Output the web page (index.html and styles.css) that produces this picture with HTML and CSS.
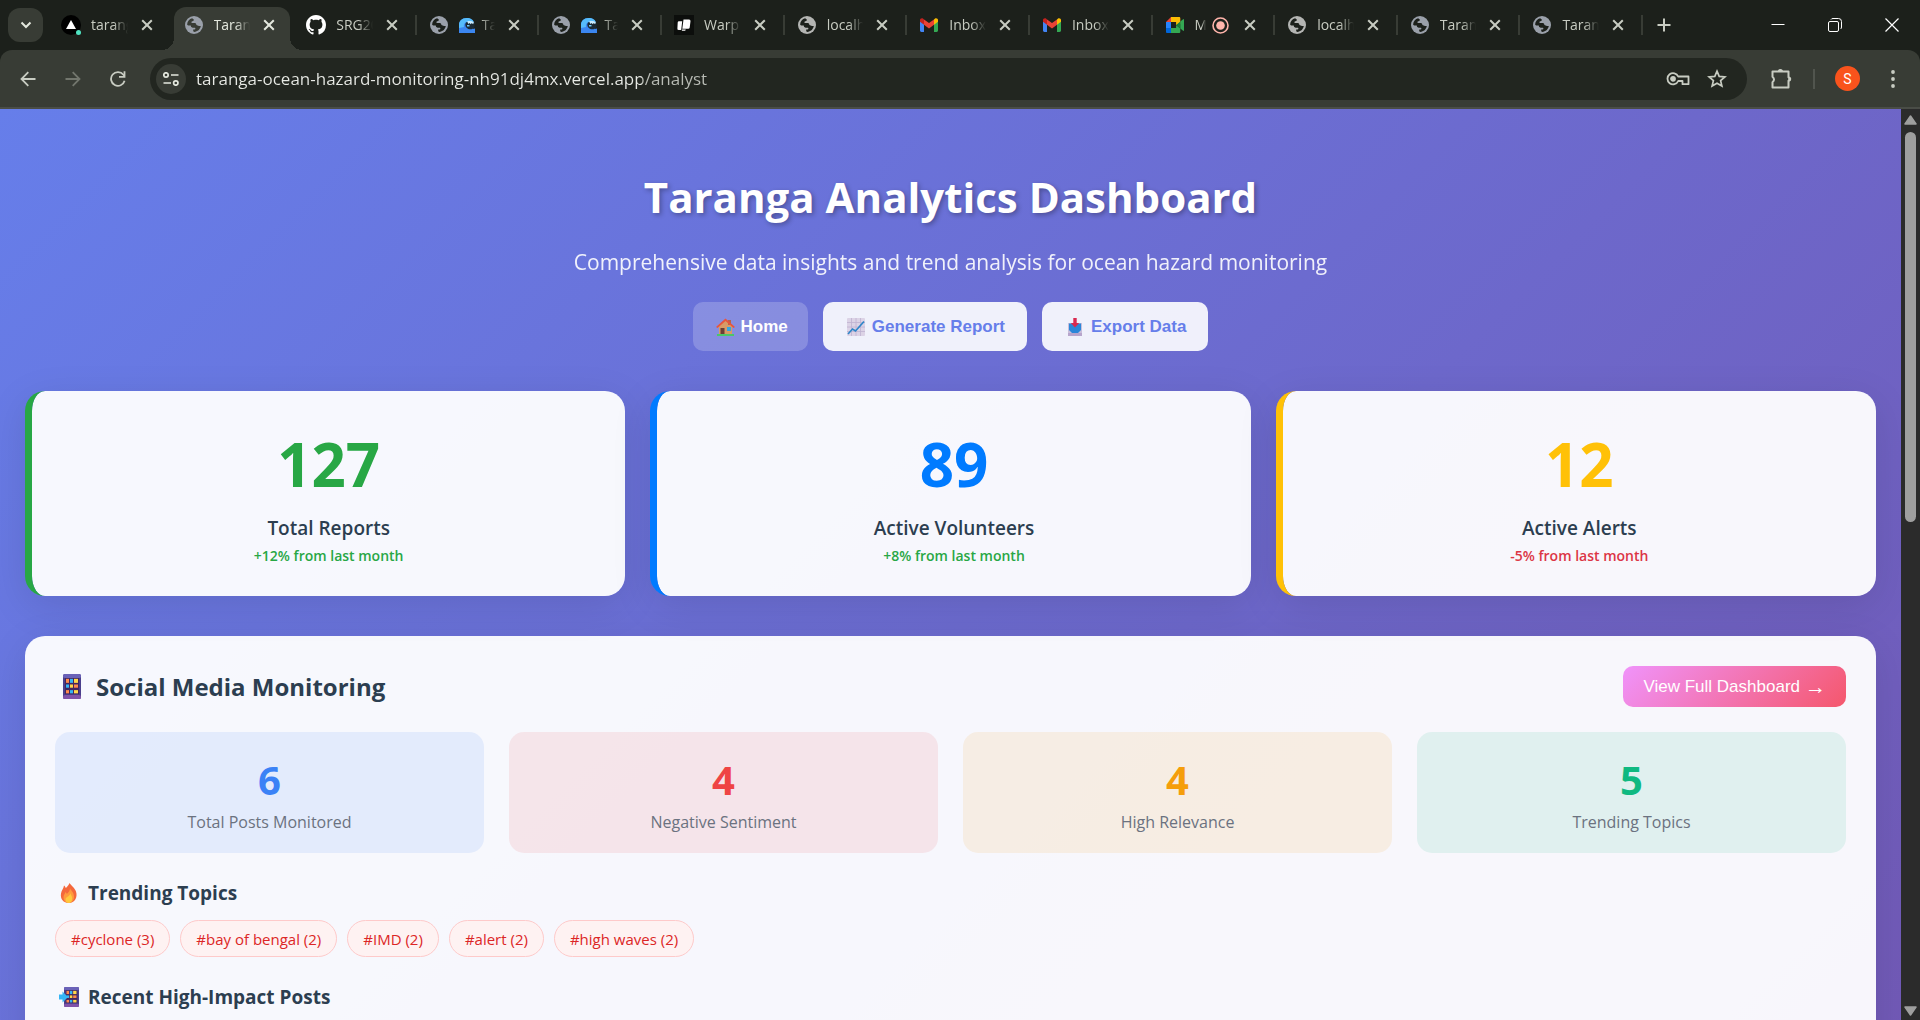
FILE: index.html
```html
<!DOCTYPE html>
<html lang="en">
<head>
<meta charset="utf-8">
<meta name="viewport" content="width=device-width, initial-scale=1">
<title>Taranga Analytics Dashboard</title>
<link rel="stylesheet" href="styles.css">
</head>
<body>
<svg class="defs" width="0" height="0" aria-hidden="true">
  <symbol id="globe" viewBox="0 0 18 18">
    <circle cx="9" cy="9" r="9" fill="currentColor"/>
    <path fill="var(--cut)" d="M2.1 8.4 C2.3 5.2 4.3 2.9 7.1 2.2 L8.8 3.5 C8.9 4.6 8.4 5 7.4 5.3 C6.3 5.7 6.2 6.5 6.8 7.1 H9.9 C11 7.2 11.3 8 11.4 9.1 C12.4 9.3 12.9 10 14.3 9.9 L15.8 10.1 C15.2 13.5 12.6 15.8 9.3 15.9 L8.2 15.2 V13.6 H9.6 C10.5 13.4 10.6 12.4 10 11.7 H7.7 C6.3 11.5 5.8 10.7 5.8 9.6 H4 C3 9.5 2.6 8.9 2.1 8.4Z"/>
  </symbol>
  <symbol id="x" viewBox="0 0 12 12"><path d="M1.2 1.2 10.8 10.8M10.8 1.2 1.2 10.8" stroke="currentColor" stroke-width="2" fill="none"/></symbol>
  <symbol id="gmail" viewBox="0 0 18 14">
    <path fill="#4285f4" d="M0 3v9.6C0 13.400.6 14 1.300 14H4V5.500z"/>
    <path fill="#34a853" d="M14 14h2.700c.7 0 1.300-.6 1.300-1.400V3l-4 2.500z"/>
    <path fill="#ea4335" d="M4 6.800V1.400l5 3.700 5-3.700v5.400l-5 3.800z"/>
    <path fill="#c5221f" d="M0 2.200v1.600l4 3V1.400L3.200.8C1.900-.2 0 .6 0 2.200z"/>
    <path fill="#fbbc04" d="M14 1.400v5.400l4-3V2.200c0-1.600-1.900-2.400-3.200-1.400z"/>
  </symbol>
  <symbol id="wave" viewBox="0 0 16 15">
    <path fill="#3b86f0" d="M0 15V7C0 3 3 0 7.500 0 12 0 15 2.500 15 6l-1 5 2-.5V15z"/>
    <path fill="#56bcfb" d="M0 10V7C0 3 3 0 7.500 0 12 0 14.500 2 15 5L9 4C6 4 4.500 6 5 9z"/>
    <path fill="#1c2a33" d="M7 4.500c2-1.500 6-1.300 8.500.5v4c-1 1.800-3 2.500-5 2.200C7 10.800 5.300 7 7 4.500z"/>
    <path fill="#c9ecff" d="M8 3.500c3-1 6-.5 7 1.500l-1.200 1-1-1-1 1.200-1.200-1.200-1 1z"/>
    <path fill="#6cc8fb" d="M8 7h2.500v1.500H8z"/>
  </symbol>
  <symbol id="phone" viewBox="0 0 18 31" preserveAspectRatio="none">
    <rect width="18" height="31" rx="2" fill="#4a3f8c"/>
    <rect width="18" height="5" rx="2" fill="#6a62b8"/>
    <rect y="26" width="18" height="5" rx="2" fill="#8053a8"/>
    <rect x="2" y="5" width="14" height="20" fill="#43265f"/>
    <g fill="#ff8a4c"><rect x="3" y="6" width="3" height="5"/><rect x="11" y="13" width="4" height="4"/><rect x="3" y="20" width="3" height="4"/></g>
    <g fill="#35b5f5"><rect x="7" y="6" width="3" height="5"/><rect x="3" y="13" width="3" height="4"/><rect x="7" y="20" width="3" height="4"/></g>
    <g fill="#ffd84a"><rect x="11" y="6" width="4" height="5"/><rect x="7" y="13" width="3" height="4"/><rect x="11" y="20" width="4" height="4"/></g>
  </symbol>
</svg>

<header class="browser">
  <div class="strip">
    <button class="tab-search" aria-label="Search tabs"><svg width="12" height="8" viewBox="0 0 12 8"><path d="M1.500 1.500 6 6l4.500-4.500" fill="none" stroke="currentColor" stroke-width="2"/></svg></button>
    <div class="tabs">
      <div class="tab"><svg class="fav" width="20" height="20" viewBox="0 0 20 20"><circle cx="10" cy="10" r="10" fill="#000"/><path d="M10 5l5 9H5z" fill="#fff"/><circle cx="17.500" cy="17.500" r="2.500" fill="#50e3c2"/></svg><span class="tab-title">taranga</span><button class="tab-close" aria-label="Close tab"><svg width="12" height="12"><use href="#x"/></svg></button></div>
      <div class="tab active"><svg class="fav cool" width="18" height="18"><use href="#globe"/></svg><span class="tab-title">Taranga</span><button class="tab-close" aria-label="Close tab"><svg width="12" height="12"><use href="#x"/></svg></button></div>
      <div class="tab"><svg class="fav" width="20" height="20" viewBox="0 0 16 16"><path fill="#fff" d="M8 0C3.580 0 0 3.580 0 8c0 3.540 2.290 6.530 5.470 7.590.4.070.55-.17.55-.38 0-.19-.01-.82-.01-1.490-2.010.37-2.530-.49-2.690-.94-.09-.23-.48-.94-.82-1.130-.28-.15-.68-.52-.01-.53.63-.01 1.080.58 1.230.82.72 1.210 1.870.87 2.330.66.070-.52.28-.87.51-1.070-1.780-.2-3.640-.89-3.640-3.950 0-.87.31-1.590.82-2.150-.08-.2-.36-1.020.08-2.120 0 0 .67-.21 2.200.82.64-.18 1.320-.27 2-.27s1.360.09 2 .27c1.530-1.040 2.200-.82 2.200-.82.44 1.100.16 1.920.08 2.120.51.56.82 1.270.82 2.150 0 3.070-1.870 3.750-3.650 3.950.29.25.54.73.54 1.480 0 1.070-.01 1.930-.01 2.200 0 .21.15.46.55.38A8 8 0 0 0 16 8c0-4.420-3.580-8-8-8z"/></svg><span class="tab-title">SRG20</span><button class="tab-close" aria-label="Close tab"><svg width="12" height="12"><use href="#x"/></svg></button></div>
      <div class="tab"><svg class="fav cool" width="18" height="18"><use href="#globe"/></svg><span class="tab-title"><svg width="16" height="15"><use href="#wave"/></svg>Taranga</span><button class="tab-close" aria-label="Close tab"><svg width="12" height="12"><use href="#x"/></svg></button></div>
      <div class="tab"><svg class="fav cool" width="18" height="18"><use href="#globe"/></svg><span class="tab-title"><svg width="16" height="15"><use href="#wave"/></svg>Taranga</span><button class="tab-close" aria-label="Close tab"><svg width="12" height="12"><use href="#x"/></svg></button></div>
      <div class="tab"><svg class="fav" width="20" height="20" viewBox="0 0 20 20"><rect width="20" height="20" fill="#0c0e0c"/><path fill="#fff" d="M9.500 4.500h5.500a1.500 1.500 0 0 1 1.500 1.700l-.8 6.300a1.500 1.500 0 0 1-1.500 1.300H8.300z"/><path fill="#fff" d="M5 6.300h3.200L7.200 15H4.800a1.400 1.400 0 0 1-1.400-1.600l.3-5.800A1.300 1.300 0 0 1 5 6.300zM8 14.500h3.800l-.6 1.300H7.800z"/></svg><span class="tab-title">Warp</span><button class="tab-close" aria-label="Close tab"><svg width="12" height="12"><use href="#x"/></svg></button></div>
      <div class="tab"><svg class="fav warm" width="18" height="18"><use href="#globe"/></svg><span class="tab-title">localhost</span><button class="tab-close" aria-label="Close tab"><svg width="12" height="12"><use href="#x"/></svg></button></div>
      <div class="tab"><svg class="fav" width="18" height="14"><use href="#gmail"/></svg><span class="tab-title">Inbox</span><button class="tab-close" aria-label="Close tab"><svg width="12" height="12"><use href="#x"/></svg></button></div>
      <div class="tab"><svg class="fav" width="18" height="14"><use href="#gmail"/></svg><span class="tab-title">Inbox</span><button class="tab-close" aria-label="Close tab"><svg width="12" height="12"><use href="#x"/></svg></button></div>
      <div class="tab"><svg class="fav" width="18" height="16" viewBox="0 0 18 16"><path fill="#ea4335" d="M0 5 5 0v5z"/><path fill="#fbbc04" d="M5 0h8c.8 0 1.300.5 1.300 1.300V7l-4.200 1V5H5z"/><path fill="#2684fc" d="M0 5h5v6H0z"/><path fill="#0066da" d="M0 11h5v5H1.300C.5 16 0 15.500 0 14.700z"/><path fill="#34a853" d="M5 11h5.100V8l4.200 3.500v3.200c0 .8-.5 1.300-1.300 1.300H5z"/><path fill="#188038" d="M10.100 8 14.300 4.500v7z"/><path fill="#34a853" d="m14.300 4.500 2.800-2.300c.4-.3.900 0 .9.500v10.600c0 .5-.5.800-.9.500l-2.800-2.300z"/></svg><span class="tab-title short">Meet</span><svg class="rec" width="17" height="17" viewBox="0 0 17 17"><circle cx="8.500" cy="8.500" r="7.500" fill="none" stroke="#ffb4ab" stroke-width="1.600"/><circle cx="8.500" cy="8.500" r="4.300" fill="#ffb4ab"/></svg><button class="tab-close" aria-label="Close tab"><svg width="12" height="12"><use href="#x"/></svg></button></div>
      <div class="tab"><svg class="fav warm" width="18" height="18"><use href="#globe"/></svg><span class="tab-title">localhost</span><button class="tab-close" aria-label="Close tab"><svg width="12" height="12"><use href="#x"/></svg></button></div>
      <div class="tab"><svg class="fav cool" width="18" height="18"><use href="#globe"/></svg><span class="tab-title">Taranga</span><button class="tab-close" aria-label="Close tab"><svg width="12" height="12"><use href="#x"/></svg></button></div>
      <div class="tab"><svg class="fav cool" width="18" height="18"><use href="#globe"/></svg><span class="tab-title">Taranga</span><button class="tab-close" aria-label="Close tab"><svg width="12" height="12"><use href="#x"/></svg></button></div>
    </div>
    <button class="new-tab" aria-label="New tab"><svg width="14" height="14" viewBox="0 0 14 14"><path d="M7 .5v13M.5 7h13" stroke="currentColor" stroke-width="2"/></svg></button>
    <div class="window-controls">
      <button aria-label="Minimize"><svg width="14" height="14" viewBox="0 0 14 14"><path d="M.5 6.500h13" stroke="#fff"/></svg></button>
      <button aria-label="Restore"><svg width="14" height="14" viewBox="0 0 14 14"><rect x=".5" y="3.500" width="10" height="10" rx="1.500" fill="none" stroke="#fff"/><path d="M3 1.500Q3.500.5 5 .5h5.500a3 3 0 0 1 3 3V9q0 1.500-1 2" fill="none" stroke="#fff"/></svg></button>
      <button aria-label="Close window"><svg width="14" height="14" viewBox="0 0 14 14"><path d="M.5.5l13 13M13.500.5l-13 13" stroke="#fff" stroke-width="1.200"/></svg></button>
    </div>
  </div>

  <div class="toolbar">
    <nav class="history" aria-label="History">
      <button aria-label="Back"><svg width="16" height="16" viewBox="0 0 16 16"><path d="M15.500 8H1.800M8.300 1.200 1.500 8l6.800 6.800" fill="none" stroke="currentColor" stroke-width="1.800"/></svg></button>
      <button class="dim" aria-label="Forward"><svg width="16" height="16" viewBox="0 0 16 16"><path d="M.5 8h13.700M7.700 1.200 14.500 8l-6.800 6.800" fill="none" stroke="currentColor" stroke-width="1.800"/></svg></button>
      <button aria-label="Reload"><svg width="16" height="16" viewBox="0 0 16 16"><path d="M14.600 9.800A6.900 6.900 0 1 1 13.400 3.700L14.500 5" fill="none" stroke="currentColor" stroke-width="1.800"/><path d="M15.400.3v6.400H9V5h4.600V.3z" fill="currentColor"/></svg></button>
    </nav>
    <div class="omnibox">
      <button class="site-info" aria-label="View site information"><svg width="16" height="14" viewBox="0 0 16 14" fill="none" stroke="currentColor" stroke-width="1.700"><circle cx="3" cy="3" r="2.200"/><path d="M8 3h7.500M.5 11H8"/><circle cx="12.800" cy="11" r="2.200"/></svg></button>
      <input class="url" type="text" aria-label="Address" value="taranga-ocean-hazard-monitoring-nh91dj4mx.vercel.app/analyst">
      <button aria-label="Manage passwords"><svg width="24" height="14" viewBox="0 0 24 14" fill="none" stroke="currentColor" stroke-width="1.800"><path d="M12.200 4.500h10.300v7.700h-6V9h-4.300A5.600 5.600 0 1 1 12.200 4.500z" stroke-linejoin="round"/><circle cx="7" cy="6.800" r="2" fill="currentColor"/></svg></button>
      <button aria-label="Bookmark this tab"><svg width="20" height="19" viewBox="0 0 20 19"><path d="M10 2.200l2.200 5.200 5.700.5-4.300 3.700 1.300 5.500-4.900-2.900-4.900 2.900 1.300-5.500L2.100 7.900l5.700-.5z" fill="none" stroke="currentColor" stroke-width="1.700"/></svg></button>
    </div>
    <div class="tools">
      <button aria-label="Extensions"><svg width="22" height="22" viewBox="0 0 22 22"><path d="M2.500 3.500h16v5.800l1.700 1.700-1.700 1.700v6.800h-16v-5.300q3-2.700 0-5.400z" fill="none" stroke="currentColor" stroke-width="2" stroke-linejoin="round"/><path d="M7.800 3.500a2.600 2.600 0 0 1 5.200 0zM18.500 8.400a2.600 2.600 0 0 1 0 5.200z" fill="currentColor"/></svg></button>
      <span class="divider"></span>
      <button class="avatar" aria-label="Profile">S</button>
      <button aria-label="Menu"><svg width="4" height="18" viewBox="0 0 4 18" fill="currentColor"><circle cx="2" cy="2" r="1.900"/><circle cx="2" cy="9" r="1.900"/><circle cx="2" cy="16" r="1.900"/></svg></button>
    </div>
  </div>
</header>

<div class="viewport">
  <main class="page">
    <header class="hero">
      <h1>Taranga Analytics Dashboard</h1>
      <p>Comprehensive data insights and trend analysis for ocean hazard monitoring</p>
      <div class="actions">
        <button class="btn ghost"><svg width="24" height="18" viewBox="0 0 24 18"><path d="M6 8 12.500 2 19 8v9H6z" fill="#d89a66"/><path d="M15 2h3v5h-3z" fill="#b5654a"/><path d="M3 9 12.500.5 22 9l-1.500 1L12.500 3 4.500 10z" fill="#e8553c"/><rect x="7.500" y="10" width="4" height="7" fill="#6b3f36"/><rect x="14" y="9" width="4" height="4" fill="#35a5e0"/><rect x="4" y="16" width="17" height="2" fill="#4ac66a"/></svg>Home</button>
        <button class="btn"><svg width="24" height="18" viewBox="0 0 24 18"><rect x="3" width="18" height="18" rx="1" fill="#dcd3e6"/><path d="M7.500 0v18M12 0v18M16.500 0v18M3 4.500h18M3 9h18M3 13.500h18" stroke="#bfb3d0" stroke-width=".8"/><path d="M4 16l4.500-5 3 2L20 3.500" fill="none" stroke="#2f86c9" stroke-width="1.700"/></svg>Generate Report</button>
        <button class="btn"><svg width="24" height="18" viewBox="0 0 24 18"><path d="M5 5h14v12.500H5z" fill="#c9bedb"/><path d="M6 5.500h12v6.500l-3 3H9l-3-3z" fill="#2b86d8"/><path d="M5 15h14v3H5z" fill="#b7a5cc"/><path d="M10.300 0h3.400v5h2.500L12 9.500 7.800 5h2.500z" fill="#d9284f"/></svg>Export Data</button>
      </div>
    </header>

    <section class="kpis" aria-label="Key figures">
      <article class="kpi green"><strong>127</strong><h2>Total Reports</h2><p>+12% from last month</p></article>
      <article class="kpi blue"><strong>89</strong><h2>Active Volunteers</h2><p>+8% from last month</p></article>
      <article class="kpi amber"><strong>12</strong><h2>Active Alerts</h2><p class="down">-5% from last month</p></article>
    </section>

    <section class="panel">
      <div class="panel-head">
        <h2><svg width="34" height="25" viewBox="0 0 34 25"><use href="#phone" x="8" width="18" height="25"/></svg>Social Media Monitoring</h2>
        <button class="full">View Full Dashboard <span class="arrow">→</span></button>
      </div>
      <div class="stats">
        <div class="stat s-blue"><strong>6</strong><span>Total Posts Monitored</span></div>
        <div class="stat s-red"><strong>4</strong><span>Negative Sentiment</span></div>
        <div class="stat s-amber"><strong>4</strong><span>High Relevance</span></div>
        <div class="stat s-green"><strong>5</strong><span>Trending Topics</span></div>
      </div>
      <h3><svg width="28" height="20" viewBox="0 0 28 20"><path d="M14.500 0c1 2 5 4.500 6.500 8.500 2 6-1.500 11.500-7 11.500S5 16 6 10.500C6.500 7 8.500 6 9 2.500c1 .7 1.500 1.600 1.700 2.500C12 4 13.500 2.500 14.500 0z" fill="#f4683c"/><path d="M15 5c.5 2.500 4 4 4 8.500 0 4-2.200 6.500-5.200 6.500S8.500 17.500 8.500 14.500c0-2.500 1.500-3.500 2-5.500.8.500 1.200 1.200 1.300 2C13.500 9.500 15 8 15 5z" fill="#ff9a3d"/><path d="M15.500 10c0 2 1.700 3 1.700 5.500 0 2.700-1.400 4.500-3.400 4.500s-3.300-1.500-3.300-3.500c0-2.700 4.500-3 5-6.500z" fill="#ffc83d"/></svg>Trending Topics</h3>
      <ul class="chips">
        <li>#cyclone (3)</li><li>#bay of bengal (2)</li><li>#IMD (2)</li><li>#alert (2)</li><li>#high waves (2)</li>
      </ul>
      <h3><svg width="28" height="20" viewBox="0 0 28 20"><use href="#phone" x="9" width="15" height="20"/><path d="M4 7.500h3.500V4.500L13 10l-5.500 5.500v-3H4z" fill="#35b5f5"/></svg>Recent High-Impact Posts</h3>
    </section>
  </main>
  <div class="scrollbar" aria-hidden="true">
    <svg width="13" height="10" viewBox="0 0 13 10"><path d="M6.500 1 12 9H1z" fill="#9f9f9f" stroke="#9f9f9f" stroke-linejoin="round" stroke-width="1.500"/></svg>
    <div class="track"><div class="thumb"></div></div>
    <svg width="13" height="10" viewBox="0 0 13 10"><path d="M6.500 9 12 1H1z" fill="#9f9f9f" stroke="#9f9f9f" stroke-linejoin="round" stroke-width="1.500"/></svg>
  </div>
</div>
</body>
</html>
```
FILE: styles.css
```css
:root {
  --strip: #1c201b;
  --bar: #383c35;
  --field: #222620;
  --icon: #c8ccc2;
  --ink: #2c3e50;
}
* { box-sizing: border-box; }
body {
  margin: 0;
  height: 100vh;
  display: flex;
  flex-direction: column;
  overflow: hidden;
  font-family: "Open Sans", "Noto Sans", sans-serif;
}
h1, h2, h3, p, ul { margin: 0; padding: 0; }
button { font: inherit; border: 0; padding: 0; background: none; color: inherit; display: inline-flex; align-items: center; justify-content: center; }
svg { display: block; flex: none; }
.defs { position: absolute; }

/* Browser frame */
.browser { flex: none; background: var(--strip); color: var(--icon); }
.strip { height: 50px; display: flex; align-items: center; padding-left: 8px; }
.tab-search { width: 35px; height: 34px; margin-right: 6px; border-radius: 12px; background: var(--bar); color: #e4e8de; flex: none; }
.tabs { flex: 0 1 1594px; min-width: 0; display: grid; grid-template-columns: repeat(13, 1fr); align-self: stretch; }
.tab {
  --cut: var(--strip);
  position: relative;
  display: flex;
  align-items: center;
  padding: 0 19px 0 12px;
  min-width: 0;
}
.tab::after { content: ""; position: absolute; right: 0; top: 15px; width: 2px; height: 20px; background: var(--bar); }
.tab:first-child::after { display: none; }
.fav { width: 20px; margin-right: 10px; }
.cool { color: #9aa0aa; }
.warm { color: #b4b5b3; }
.tab-title {
  flex: 1 1 auto;
  width: 0;
  display: flex;
  align-items: center;
  gap: 7px;
  overflow: hidden;
  white-space: nowrap;
  font-size: 14px;
  line-height: 20px;
  margin-right: 13px;
  -webkit-mask-image: linear-gradient(90deg, #000 60%, transparent);
  mask-image: linear-gradient(90deg, #000 60%, transparent);
}
.tab-title.short { margin-right: 6px; }
.rec { margin-right: 15px; }
.tab.active { --cut: var(--bar); color: #e4e8de; }
.tab.active::before {
  content: "";
  position: absolute;
  inset: 7px 4px 0 2px;
  border-radius: 12px 12px 0 0;
  background: var(--bar);
}
.tab.active::after {
  width: auto;
  height: 12px;
  inset: auto -8px 0 -10px;
  background:
    radial-gradient(circle at 0 0, transparent 12px, var(--bar) 12px) 0 0 / 12px 12px no-repeat,
    radial-gradient(circle at 100% 0, transparent 12px, var(--bar) 12px) 100% 0 / 12px 12px no-repeat;
}
.tab.active > * { position: relative; z-index: 1; }
.new-tab { width: 42px; height: 34px; flex: none; }
.window-controls { margin-left: auto; display: flex; flex: none; align-self: stretch; }
.window-controls button { width: 57px; }

.toolbar {
  height: 59px;
  display: flex;
  align-items: center;
  background: var(--bar);
  border-bottom: 2px solid #4a4d47;
  border-radius: 12px 12px 0 0;
}
.history { display: flex; width: 150px; padding-left: 5px; flex: none; }
.history button { width: 45px; height: 40px; }
.dim { color: #72766d; }
.omnibox { flex: 1; height: 42px; display: flex; align-items: center; gap: 17px; padding: 0 20px 0 6px; border-radius: 21px; background: var(--field); }
.site-info { width: 30px; height: 30px; border-radius: 15px; background: var(--bar); margin-right: -7px; color: #e4e8de; }
.url {
  flex: 1;
  min-width: 0;
  border: 0;
  padding: 0;
  font-family: "Open Sans", "Noto Sans", sans-serif;
  font-size: 17px;
  line-height: 30px;
  color: #e8eae5;
  /* host in a bright tone, path dimmed */
  background: linear-gradient(90deg, #e8eae5 446px, #b9bcb5 446px);
  -webkit-background-clip: text;
  background-clip: text;
  -webkit-text-fill-color: transparent;
  outline: 0;
}
.tools { width: 173px; flex: none; display: flex; align-items: center; padding-left: 23px; }
.divider { width: 2px; height: 20px; margin: 0 20px 0 21px; background: #51554e; }
.avatar { width: 25px; height: 25px; margin-right: 31px; border-radius: 50%; background: #f9531c; color: #fff; font-family: Roboto, sans-serif; font-size: 14px; }

/* Page */
.viewport { flex: 1; min-height: 0; display: flex; }
.page {
  flex: 1;
  min-width: 0;
  overflow: hidden;
  padding: 58px 25px 0;
  background: linear-gradient(135deg, #667eea, #764ba2) 0 0 / 100% 2048px;
}
.hero { text-align: center; color: #fff; }
h1 { font-size: 42px; line-height: 60px; font-weight: 700; text-shadow: 2px 2px 5px rgba(0, 0, 0, .3); }
.hero p { margin-top: 20px; font-size: 21px; line-height: 30px; opacity: .9; }
.actions { display: flex; justify-content: center; gap: 15px; margin: 25px 0 40px; }
.btn {
  gap: 4px;
  height: 49px;
  padding: 0 22px 0 21px;
  border-radius: 10px;
  background: rgba(255, 255, 255, .9);
  color: #667eea;
  font: 700 17px "Liberation Sans", Arial, sans-serif;
}
.btn.ghost { background: rgba(255, 255, 255, .2); color: #fff; padding: 0 20px; }

.kpis { display: grid; grid-template-columns: repeat(3, 1fr); gap: 25px; margin-bottom: 40px; }
.kpi {
  padding: 33px 25px 28px;
  border-left: 7px solid var(--tone);
  border-radius: 20px;
  background: rgba(255, 255, 255, .95);
  background-clip: padding-box;
  box-shadow: 0 10px 40px rgba(0, 0, 0, .1);
  text-align: center;
}
.kpi strong { display: block; font-size: 60px; line-height: 80px; color: var(--tone); }
.kpi h2 { margin-top: 10px; font-size: 19px; line-height: 28px; font-weight: 600; color: var(--ink); }
.kpi p { margin-top: 2px; font-size: 14px; line-height: 24px; font-weight: 600; color: #28a745; }
.kpi .down { color: #dc3545; }
.green { --tone: #28a745; }
.blue { --tone: #007bff; }
.amber { --tone: #ffc107; }

.panel { padding: 30px; border-radius: 20px; background: rgba(255, 255, 255, .95); box-shadow: 0 10px 40px rgba(0, 0, 0, .1); color: var(--ink); }
.panel-head { display: flex; align-items: center; justify-content: space-between; margin-bottom: 25px; }
.panel-head h2 { display: flex; align-items: center; gap: 7px; font-size: 24px; line-height: 34px; font-weight: 700; }
.full {
  gap: 5px;
  height: 41px;
  padding: 0 20px;
  border-radius: 10px;
  background: linear-gradient(135deg, #f093fb, #f5576c);
  color: #fff;
  font: 17px "Liberation Sans", Arial, sans-serif;
}
.arrow { font-size: 21px; line-height: 21px; }
.stats { display: grid; grid-template-columns: repeat(4, 1fr); gap: 25px; }
.stat { padding: 21px 20px 17px; border-radius: 15px; text-align: center; }
.stat strong { display: block; font-size: 40px; line-height: 54px; }
.stat span { display: block; margin-top: 2px; font-size: 16px; line-height: 27px; color: #6b7280; }
.s-blue { background: rgba(59, 130, 246, .1); }
.s-blue strong { color: #3b82f6; }
.s-red { background: rgba(239, 68, 68, .1); }
.s-red strong { color: #ef4444; }
.s-amber { background: rgba(245, 158, 11, .1); }
.s-amber strong { color: #f59e0b; }
.s-green { background: rgba(16, 185, 129, .1); }
.s-green strong { color: #10b981; }
.panel h3 { display: flex; align-items: center; gap: 5px; margin: 26px 0 13px; font-size: 19px; line-height: 28px; font-weight: 700; }
.chips { display: flex; flex-wrap: wrap; gap: 10px; list-style: none; }
.chips li { padding: 6px 15px 4px; border: 1px solid #fecaca; border-radius: 19px; background: #fef2f2; color: #dc2626; font-size: 15px; line-height: 25px; font-weight: 500; }

/* Scrollbar */
.scrollbar { width: 19px; flex: none; display: flex; flex-direction: column; align-items: center; padding: 6px 0 4px; background: #2b2b2b; }
.track { flex: 1; width: 11px; padding: 7px 0; }
.thumb { height: 45%; border-radius: 6px; background: #9f9f9f; }
```
